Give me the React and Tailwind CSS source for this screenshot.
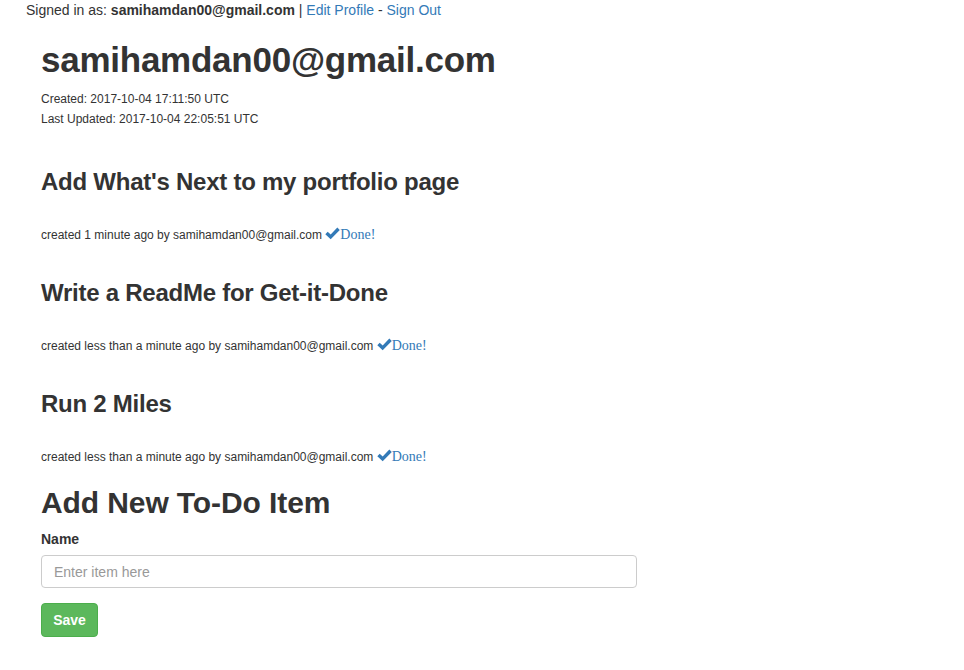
import { useState } from "react";

const items = [
  { title: "Add What's Next to my portfolio page", when: "1 minute ago" },
  { title: "Write a ReadMe for Get-it-Done", when: "less than a minute ago" },
  { title: "Run 2 Miles", when: "less than a minute ago" },
];

function CheckIcon() {
  return (
    <svg viewBox="0 0 14 14" className="inline-block h-[15px] w-[15px] align-[-2px]" fill="#337ab7">
      <path d="M0.3 7.6 L2.5 5.3 L5.3 8.0 L11.5 1.4 L13.8 3.7 L5.3 12.3 Z" />
    </svg>
  );
}

export default function App() {
  const [name, setName] = useState("");

  return (
    <div className="min-h-[670px] bg-white text-[#333] font-['Liberation_Sans',Arial,sans-serif]">
      <div className="pl-[26px] text-[14px] leading-[20px]">
        Signed in as: <b>samihamdan00@gmail.com</b> |{" "}
        <a href="#" className="text-[#337ab7]">Edit Profile</a> -{" "}
        <a href="#" className="text-[#337ab7]">Sign Out</a>
      </div>

      <div className="pl-[41px]">
        <h1 className="mt-[20px] mb-[9px] text-[35px] leading-[40px] font-bold tracking-[-0.25px]">samihamdan00@gmail.com</h1>
        <p className="text-[12px] leading-[20px]">Created: 2017-10-04 17:11:50 UTC</p>
        <p className="text-[12px] leading-[20px]">Last Updated: 2017-10-04 22:05:51 UTC</p>

        <div className="mt-[40px]">
          {items.map((item, i) => (
            <div key={i} className={i > 0 ? "mt-[35px]" : ""}>
              <h2 className="text-[24px] leading-[26px] font-bold tracking-[-0.25px]">{item.title}</h2>
              <p className="mt-[30px] text-[12px] leading-[20px]">
                created {item.when} by samihamdan00@gmail.com{" "}
                <a href="#" className="text-[#337ab7]">
                  <CheckIcon />
                  <span className="font-['Liberation_Serif',serif] text-[14px]">Done!</span>
                </a>
              </p>
            </div>
          ))}
        </div>

        <h1 className="mt-[18px] text-[30px] leading-[36px] font-bold tracking-[-0.1px]">Add New To-Do Item</h1>
        <label className="mt-[8px] block text-[14px] leading-[20px] font-bold">Name</label>
        <input
          value={name}
          onChange={(e) => setName(e.target.value)}
          placeholder="Enter item here"
          className="mt-[6px] block h-[33px] w-[596px] rounded-[4px] border border-[#ccc] px-[12px] text-[14px] text-[#555] placeholder:text-[#999] outline-none"
        />
        <button className="mt-[15px] h-[34px] w-[57px] rounded-[4px] border border-[#4cae4c] bg-[#5cb85c] text-[14px] font-bold text-white">
          Save
        </button>
      </div>
    </div>
  );
}
